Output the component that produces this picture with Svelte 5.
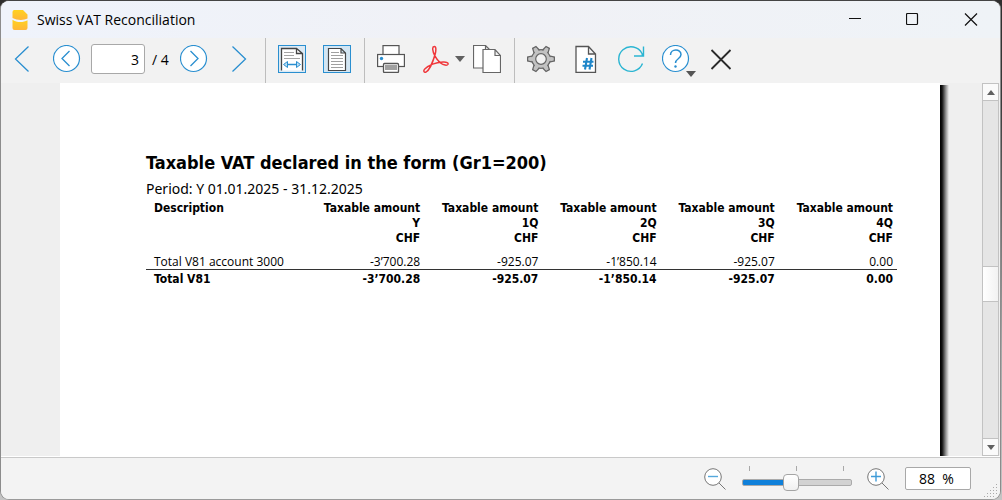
<script lang="ts">
  let page = $state('3');
  let zoom = $state(88);
  const pageCount = 4;
  const fill = $derived((zoom / 200) * 100);

  const columns = ['Y', '1Q', '2Q', '3Q', '4Q'];
  const amounts = ['-3’700.28', '-925.07', '-1’850.14', '-925.07', '0.00'];
  const teeth = [30, 90, 150, 210, 270, 330];
</script>

<div class="window">
  <header class="titlebar">
    <svg class="logo" width="16" height="20" viewBox="0 0 16 20" aria-hidden="true">
      <defs>
        <linearGradient id="gold" x1="0" y1="0" x2="0" y2="1">
          <stop offset="0" stop-color="#ffd21f" />
          <stop offset="1" stop-color="#ffb638" />
        </linearGradient>
      </defs>
      <path d="M2 0h9L15.500 4.500v4C12 10.500 5 10.500 .5 8V2A2 2 0 0 1 2 0z" fill="url(#gold)" />
      <path d="M.5 9.800c4 3 11 3 15 .5V18a2 2 0 0 1-2 2h-11a2 2 0 0 1-2-2z" fill="url(#gold)" />
    </svg>
    <h1>Swiss VAT Reconciliation</h1>
    <div class="controls">
      <button aria-label="Minimize"><svg width="14" height="14" viewBox="0 0 14 14"><path d="M1 5.500h12" /></svg></button>
      <button aria-label="Maximize"><svg width="14" height="14" viewBox="0 0 14 14"><rect x=".5" y=".5" width="11" height="11" rx="1" /></svg></button>
      <button aria-label="Close"><svg width="14" height="14" viewBox="0 0 14 14"><path d="M1 .5l12 12M13 .5l-12 12" /></svg></button>
    </div>
  </header>

  <div class="toolbar" role="toolbar" aria-label="Preview">
    <div class="group nav">
      <button class="tool" aria-label="First page">
        <svg viewBox="0 0 28 28"><path d="M20.500 1.500L7.500 14l13 12.500" stroke="#2a8fd0" stroke-width="1.300" /></svg>
      </button>
      <button class="tool" aria-label="Previous page">
        <svg viewBox="0 0 28 28"><circle cx="13.500" cy="13.500" r="13" fill="#fff" stroke="#2a8fd0" stroke-width="1.200" /><path d="M16.500 6L9 13.500l7.500 7.500" stroke="#2a8fd0" stroke-width="1.300" /></svg>
      </button>
      <div class="pager">
        <input aria-label="Page number" bind:value={page} />
        <span>/ {pageCount}</span>
      </div>
      <button class="tool" aria-label="Next page">
        <svg viewBox="0 0 28 28"><circle cx="13.500" cy="13.500" r="13" fill="#fff" stroke="#2a8fd0" stroke-width="1.200" /><path d="M10.500 6l7.500 7.500-7.500 7.500" stroke="#2a8fd0" stroke-width="1.300" /></svg>
      </button>
      <button class="tool" aria-label="Last page">
        <svg viewBox="0 0 28 28"><path d="M7.500 1.500l13 12.500-13 12.500" stroke="#2a8fd0" stroke-width="1.300" /></svg>
      </button>
    </div>

    <div class="group">
      <button class="tool" aria-label="Fit width">
        <svg viewBox="0 0 28 28">
          <rect x=".5" y=".5" width="27" height="27" fill="#dceaf4" stroke="#2a8fd0" />
          <path d="M3.500 25.500V3.500H18.500l6 5V25.500z" fill="#fff" />
          <path d="M3.500 25.500V3.500H18.500l6 5V25.500M18.500 3.500v5h6" stroke="#444" stroke-width="1.300" />
          <path d="M6 7.500h10M6 10.500h10M6 13.500h16" stroke="#a4a4a4" />
          <path d="M9 19.500h10" stroke="#2a8fd0" stroke-width="1.300" />
          <path d="M5.500 19.500l4-3v6zM22.500 19.500l-4-3v6z" fill="#b9dcf2" stroke="#2a8fd0" />
        </svg>
      </button>
      <button class="tool" aria-label="Fit page">
        <svg viewBox="0 0 28 28">
          <rect x=".5" y=".5" width="27" height="27" fill="#d3e6f3" stroke="#2a8fd0" />
          <path d="M5.500 3.500H18l4.500 4.500v17.500h-17zM18 3.500V8h4.500" fill="#fff" stroke="#444" stroke-width="1.200" />
          <path d="M8 7.500h8M8 10.500h12M8 13.500h12M8 16.500h12M8 19.500h12M8 22.500h12" stroke="#a0a0a0" />
        </svg>
      </button>
    </div>

    <div class="group">
      <button class="tool" aria-label="Print">
        <svg viewBox="0 0 28 28">
          <rect x="6" y=".6" width="16" height="11" fill="#fff" stroke="#555" stroke-width="1.200" />
          <rect x=".6" y="9.500" width="26.800" height="12" fill="#fff" stroke="#555" stroke-width="1.200" />
          <rect x="6.500" y="18.500" width="15" height="9" rx="1" fill="#fff" stroke="#555" stroke-width="1.300" />
          <path d="M8 22.500h12" stroke="#a0a0a0" stroke-width="5" />
          <circle cx="4.500" cy="13.500" r="1.700" fill="#2a8fd0" />
        </svg>
      </button>
      <div class="split">
        <button class="tool" aria-label="Export PDF">
          <svg viewBox="0 0 28 28"><path d="M12.200 1.500c2-.3 2 3.500 1 7.500C11.500 15 7.500 25.500 4 27c-2 .8-3-1.200-1.200-3C6.500 20.500 14 17.500 21 17c4-.2 5.500 1 5 2.200-.8 1.800-4.500 1-7.500-1.200C14 14.500 11 8 10.700 4.200c-.1-1.500.5-2.600 1.500-2.700z" stroke="#f0383c" stroke-width="1.500" /></svg>
        </button>
        <button class="caret" aria-label="PDF options"><svg width="10" height="6" viewBox="0 0 10 6"><path d="M0 0h10L5 6z" fill="#606060" /></svg></button>
      </div>
      <button class="tool" aria-label="Copy">
        <svg viewBox="0 0 28 28">
          <path d="M.5.500h12L18 6v17H.5zM12.500.500V6H18" fill="#fff" stroke="#666" stroke-width="1.200" />
          <path d="M10 4.500h12l5.500 6v17H10zM22 4.500v6h5.500" fill="#fff" stroke="#666" stroke-width="1.200" />
        </svg>
      </button>
    </div>

    <div class="group">
      <button class="tool" aria-label="Settings">
        <svg viewBox="0 0 28 28">
          {#each teeth as angle}
            <path d="M10.800 6l1.300-5.400h3.800L17.200 6" fill="#c2c2c2" stroke="#666" stroke-width="1.300" transform="rotate({angle} 14 14)" />
          {/each}
          <circle cx="14" cy="14" r="9.300" fill="#c2c2c2" stroke="#666" stroke-width="1.200" />
          {#each teeth as angle}
            <path d="M11.600 7l1.100-5h2.600l1.100 5z" fill="#c2c2c2" transform="rotate({angle} 14 14)" />
          {/each}
          <circle cx="14" cy="14" r="5.300" fill="#f2f2f2" stroke="#666" stroke-width="1.200" />
        </svg>
      </button>
      <button class="tool" aria-label="Page numbering">
        <svg viewBox="0 0 28 28">
          <path d="M4 1.500h12.500l7 7.500v18.500H4zM16.500 1.500V9h7" fill="#fff" stroke="#555" stroke-width="1.300" />
          <path d="M15 13l-2 11.500M19.500 13l-2 11.500M11 16.800h10.500M10.500 20.800h10.500" stroke="#1e86c9" stroke-width="2.100" />
        </svg>
      </button>
      <button class="tool" aria-label="Refresh">
        <svg viewBox="0 0 28 28"><path d="M25.500 18.500A12.300 12.300 0 1 1 25 8.500l.5 2M26.500 1.500v9.500H17" stroke="#2bb5d2" stroke-width="1.400" /></svg>
      </button>
      <button class="tool help" aria-label="Help">
        <svg viewBox="0 0 28 28">
          <circle cx="13.500" cy="13.500" r="13" fill="#fff" stroke="#2a8fd0" stroke-width="1.200" />
          <path d="M8.500 10c0-6.500 10.500-6.500 10.500-.5 0 4.500-5.500 4-5.500 8.500" stroke="#2a8fd0" stroke-width="1.500" />
          <circle cx="13.500" cy="21.500" r="1.200" fill="#2a8fd0" />
        </svg>
        <svg class="mark" viewBox="0 0 10 6"><path d="M0 0h10L5 6z" fill="#555" /></svg>
      </button>
      <button class="tool" aria-label="Close preview">
        <svg viewBox="0 0 28 28"><path d="M4.500 5l19 19M23.500 5l-19 19" stroke="#2a2a2a" stroke-width="1.800" /></svg>
      </button>
    </div>
  </div>

  <main class="viewport">
    <article class="sheet">
      <h2>Taxable VAT declared in the form (Gr1=200)</h2>
      <p>Period: Y 01.01.2025 - 31.12.2025</p>
      <table>
        <thead>
          <tr>
            <th scope="col">Description</th>
            {#each columns as name}
              <th scope="col">Taxable amount<br />{name}<br />CHF</th>
            {/each}
          </tr>
        </thead>
        <tbody>
          <tr>
            <td>Total V81 account 3000</td>
            {#each amounts as amount}<td>{amount}</td>{/each}
          </tr>
        </tbody>
        <tfoot>
          <tr>
            <th scope="row">Total V81</th>
            {#each amounts as amount}<td>{amount}</td>{/each}
          </tr>
        </tfoot>
      </table>
    </article>
    <div class="shadow"></div>
    <div class="scrollbar">
      <button aria-label="Scroll up"><svg width="8" height="5" viewBox="0 0 8 5"><path d="M0 5h8L4 0z" fill="#606060" /></svg></button>
      <div class="before"></div>
      <div class="thumb"></div>
      <div class="after"></div>
      <button aria-label="Scroll down"><svg width="8" height="5" viewBox="0 0 8 5"><path d="M0 0h8L4 5z" fill="#606060" /></svg></button>
    </div>
  </main>

  <footer class="status">
    <button class="lens" aria-label="Zoom out">
      <svg viewBox="0 0 22 22"><circle cx="9" cy="9" r="8.300" fill="#fff" stroke="#777" /><path d="M15 15l6.500 6.500" stroke="#777" /><path d="M4 8.500h10" stroke="#55a8dc" stroke-width="1.400" /></svg>
    </button>
    <div class="slider">
      <div class="ticks"><i></i><i></i><i></i></div>
      <input type="range" min="0" max="200" bind:value={zoom} aria-label="Zoom" style="--fill: {fill}%" />
    </div>
    <button class="lens" aria-label="Zoom in">
      <svg viewBox="0 0 22 22"><circle cx="9" cy="9" r="8.300" fill="#fff" stroke="#777" /><path d="M15 15l6.500 6.500" stroke="#777" /><path d="M4 8.500h10M9 3.500v10" stroke="#3f9cd8" stroke-width="1.400" /></svg>
    </button>
    <input class="percent" aria-label="Zoom percentage" value="{zoom}  %" />
    <svg class="grip" width="14" height="14" viewBox="0 0 14 14" aria-hidden="true">
      <path d="M12 1h1v1h-1zM12 4h1v1h-1zM9 4h1v1H9zM12 7h1v1h-1zM9 7h1v1H9zM6 7h1v1H6zM9 10h1v1H9zM6 10h1v1H6zM3 10h1v1H3zM12 10h1v1h-1zM0 13h1v1H0zM3 13h1v1H3zM6 13h1v1H6zM9 13h1v1H9z" fill="#aaa" />
    </svg>
  </footer>
</div>

<style>
  :global(body) {
    margin: 0;
    background: linear-gradient(#2e2e2e, #3a3a3a 20%, #a8a8a8 70%, #c4c4c4);
  }
  .window {
    box-sizing: border-box;
    height: 100vh;
    margin-right: 1px;
    display: flex;
    flex-direction: column;
    border: 1px solid;
    border-color: #444 #8c8c8c #9a9a9a #8c8c8c;
    border-radius: 9px;
    overflow: hidden;
    background: #f2f2f2;
    font-family: 'Open Sans', 'Noto Sans', sans-serif;
    color: #000;
  }
  button {
    display: flex;
    align-items: center;
    justify-content: center;
    margin: 0;
    padding: 0;
    border: 0;
    background: none;
  }
  svg { fill: none; display: block; }
  input { box-sizing: border-box; margin: 0; font: inherit; color: inherit; }

  .titlebar {
    height: 37px;
    flex: none;
    display: flex;
    align-items: center;
    padding-left: 11px;
    background: linear-gradient(90deg, #eff3fb, #f0f1f6 50%, #eff3f7);
  }
  h1 { margin: 0 0 0 9px; font-size: 14px; font-weight: 400; line-height: 20px; }
  .controls { display: flex; margin-left: auto; align-self: stretch; }
  .controls button { width: 58px; }
  .controls svg { stroke: #111; stroke-width: 1.2; }

  .toolbar { height: 45px; flex: none; display: flex; }
  .group {
    display: flex;
    align-items: center;
    gap: 17px;
    padding: 0 13px 3px 12px;
    border-left: 1px solid #bdbdbd;
  }
  .group.nav { padding: 0 12px 3px 7px; border: 0; }
  .group:last-child { padding-right: 0; }
  .tool { position: relative; width: 28px; height: 28px; flex: none; }
  .tool svg { width: 28px; height: 28px; }
  .pager {
    display: flex;
    align-items: center;
    width: 89px;
    gap: 7px;
    margin: 0 -17px 0 -7px;
    font-size: 14px;
  }
  .pager input {
    width: 54px;
    height: 30px;
    padding: 0 5px;
    border: 1px solid #a8a8a8;
    border-radius: 3px;
    background: #fff;
    text-align: right;
  }
  .split { display: flex; margin-right: -17px; }
  .caret { width: 23px; padding-right: 4px; }
  .tool .mark { position: absolute; right: -6px; bottom: -4px; width: 10px; height: 6px; }

  .viewport { flex: 1; min-height: 0; display: flex; background: #efefef; border-bottom: 1px solid #fff; }
  .sheet {
    flex: 1;
    min-width: 0;
    margin-left: 59px;
    padding: 68px 43px 0 86px;
    background: #fff;
    font-family: 'DejaVu Sans Condensed', 'DejaVu Sans', sans-serif;
    font-stretch: condensed;
  }
  h2 { margin: 0; font-size: 18px; line-height: 24px; font-weight: 700; }
  p { margin: 0; padding-top: 4px; font: 14px/20px 'Noto Sans', sans-serif; }
  table { width: 100%; border-collapse: collapse; table-layout: fixed; font-size: 12px; line-height: 15px; }
  th, td { padding: 2px 4px 0 0; text-align: right; vertical-align: top; white-space: nowrap; }
  th:first-child, td:first-child { padding-left: 8px; text-align: left; width: 148px; }
  thead th { padding-bottom: 7px; }
  tbody td { border-bottom: 1px solid #333; font: 12px/14px 'Open Sans', 'Noto Sans', sans-serif; }
  tfoot { font-weight: 700; }
  .shadow {
    width: 42px;
    margin-top: 2px;
    background: linear-gradient(90deg, #000, #111 2px, #999 6px, #efefef 9px);
  }

  .scrollbar {
    box-sizing: border-box;
    width: 17px;
    margin-right: 1px;
    display: flex;
    flex-direction: column;
    border: 1px solid #c2c2c2;
    background: #e5e5e5;
  }
  .scrollbar button { height: 17px; flex: none; background: #fafafa; border: 0 solid #c2c2c2; }
  .scrollbar button:first-child { border-bottom-width: 1px; }
  .scrollbar button:last-child { border-top-width: 1px; }
  .before { flex: 165; }
  .after { flex: 136; }
  .thumb { flex: 34; border: 1px solid #c2c2c2; border-width: 1px 0; background: linear-gradient(90deg, #fff, #f2f2f2); }

  .status {
    position: relative;
    height: 42px;
    flex: none;
    box-sizing: border-box;
    display: flex;
    align-items: center;
    justify-content: flex-end;
    padding-right: 29px;
    border-top: 1px solid #c9c9c9;
    background: #f3f3f3;
  }
  .lens, .lens svg { width: 22px; height: 22px; }
  .slider { width: 110px; margin: 0 15px 0 16px; }
  .ticks { display: flex; justify-content: space-between; padding: 0 8px 3px 7px; }
  .ticks i { width: 1px; height: 5px; background: #a8a8a8; }
  .slider input {
    appearance: none;
    display: block;
    width: 100%;
    height: 17px;
    background: none;
  }
  .slider input::-webkit-slider-runnable-track {
    box-sizing: border-box;
    height: 7px;
    border: 1px solid #aaa;
    border-radius: 2px;
    background: linear-gradient(90deg, #0f80da var(--fill), #d2d2d2 var(--fill));
  }
  .slider input::-webkit-slider-thumb {
    appearance: none;
    box-sizing: border-box;
    width: 16px;
    height: 17px;
    margin-top: -6px;
    border: 1px solid #a4a4a4;
    border-radius: 4px;
    background: linear-gradient(#fff, #f0f0f0);
  }
  .percent {
    width: 66px;
    height: 23px;
    margin-left: 16px;
    padding: 0 13px;
    border: 1px solid #a8a8a8;
    border-radius: 2px;
    background: #fff;
    font-size: 14px;
    white-space: pre;
  }
  .grip { position: absolute; right: 2px; bottom: 2px; }
</style>
